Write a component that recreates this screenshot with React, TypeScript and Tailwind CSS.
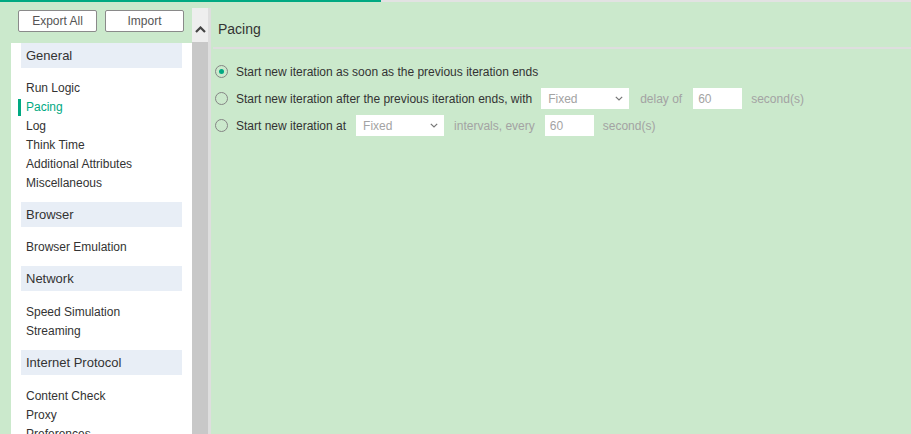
import React from "react";

const font = { fontFamily: '"Liberation Sans", Arial, sans-serif' };

function Radio({ checked }: { checked?: boolean }) {
  return (
    <span className="w-[13px] h-[13px] rounded-full border border-[#858585] flex items-center justify-center shrink-0">
      {checked && <span className="w-[5px] h-[5px] rounded-full bg-[#01a982]" />}
    </span>
  );
}

function Select({ className = "" }: { className?: string }) {
  return (
    <div className={`w-[88px] h-[21px] bg-white flex items-center justify-between pl-[7px] pr-[6px] text-[12px] text-[#a3a3a3] ${className}`}>
      <span>Fixed</span>
      <svg width="8" height="5" viewBox="0 0 8 5" fill="none">
        <path d="M0.8 0.8 L4 4 L7.2 0.8" stroke="#777" strokeWidth="1.2" />
      </svg>
    </div>
  );
}

function NumInput({ className = "" }: { className?: string }) {
  return (
    <div className={`w-[49px] h-[21px] bg-white flex items-center pl-[5px] text-[12px] text-[#a3a3a3] ${className}`}>60</div>
  );
}

function Header({ children }: { children: React.ReactNode }) {
  return (
    <div className="mx-[10px] h-[25px] bg-[#e8eef6] flex items-center pl-[5px] text-[13px] text-[#333]">
      {children}
    </div>
  );
}

function Item({ children, active }: { children: React.ReactNode; active?: boolean }) {
  return (
    <div className={`relative h-[19px] flex items-center pl-[15px] text-[12px] ${active ? "text-[#01a982]" : "text-[#333]"}`}>
      {active && <span className="absolute left-[7px] top-[2px] w-[3px] h-[17px] bg-[#01a982]" />}
      {children}
    </div>
  );
}

export default function App() {
  return (
    <div style={font} className="w-[911px] h-[434px] overflow-hidden bg-[#cbe9cc] flex flex-col">
      <div className="flex h-[2px] shrink-0">
        <div className="w-[381px] bg-[#01a982]" />
        <div className="flex-1 bg-[#e2e2e2]" />
      </div>
      <div className="flex flex-1 min-h-0">
        {/* left column */}
        <div className="w-[192px] shrink-0 flex flex-col">
          <div className="flex gap-[8px] pl-[18px] pt-[8px]">
            <button className="w-[79px] h-[22px] bg-white border border-[#8a8a8a] rounded-[2px] text-[12px] text-[#555]">Export All</button>
            <button className="w-[79px] h-[22px] bg-white border border-[#8a8a8a] rounded-[2px] text-[12px] text-[#555]">Import</button>
          </div>
          <div className="ml-[11px] mt-[11px] flex-1 bg-white">
            <Header>General</Header>
            <div className="pt-[10px] pb-[10px]">
              <Item>Run Logic</Item>
              <Item active>Pacing</Item>
              <Item>Log</Item>
              <Item>Think Time</Item>
              <Item>Additional Attributes</Item>
              <Item>Miscellaneous</Item>
            </div>
            <Header>Browser</Header>
            <div className="pt-[10px] pb-[10px]">
              <Item>Browser Emulation</Item>
            </div>
            <Header>Network</Header>
            <div className="pt-[11px] pb-[10px]">
              <Item>Speed Simulation</Item>
              <Item>Streaming</Item>
            </div>
            <Header>Internet Protocol</Header>
            <div className="pt-[11px] pb-[10px]">
              <Item>Content Check</Item>
              <Item>Proxy</Item>
              <Item>Preferences</Item>
            </div>
          </div>
        </div>
        {/* scrollbar */}
        <div className="w-[16px] shrink-0 mt-[6px] flex flex-col">
          <div className="h-[34px] bg-[#eeeeee] flex justify-center pt-[18px]">
            <svg width="11" height="7" viewBox="0 0 11 7" fill="none">
              <path d="M1 6 L5.5 1.5 L10 6" stroke="#444" strokeWidth="2.2" />
            </svg>
          </div>
          <div className="flex-1 bg-[#c8c8c8]" />
        </div>
        <div className="w-[3px] shrink-0 mt-[6px] bg-[#dedede]" />
        {/* main */}
        <div className="flex-1 flex flex-col">
          <div className="h-[45px] pl-[7px] pt-[18px] text-[14px] text-[#333] leading-[18px]">Pacing</div>
          <div className="h-[2px] ml-[2px] bg-[#dedede]" />
          <div className="pt-[9px] pl-[4px] text-[12px] text-[#333]">
            <div className="h-[27px] flex items-center">
              <Radio checked />
              <span className="ml-[8px]">Start new iteration as soon as the previous iteration ends</span>
            </div>
            <div className="h-[27px] flex items-center">
              <Radio />
              <span className="ml-[8px]">Start new iteration after the previous iteration ends, with</span>
              <Select className="ml-[9px]" />
              <span className="ml-[11px] text-[#a3a3a3]">delay of</span>
              <NumInput className="ml-[11px]" />
              <span className="ml-[9px] text-[#a3a3a3]">second(s)</span>
            </div>
            <div className="h-[27px] flex items-center">
              <Radio />
              <span className="ml-[8px]">Start new iteration at</span>
              <Select className="ml-[10px]" />
              <span className="ml-[10px] text-[#a3a3a3]">intervals, every</span>
              <NumInput className="ml-[10px]" />
              <span className="ml-[9px] text-[#a3a3a3]">second(s)</span>
            </div>
          </div>
        </div>
      </div>
    </div>
  );
}
